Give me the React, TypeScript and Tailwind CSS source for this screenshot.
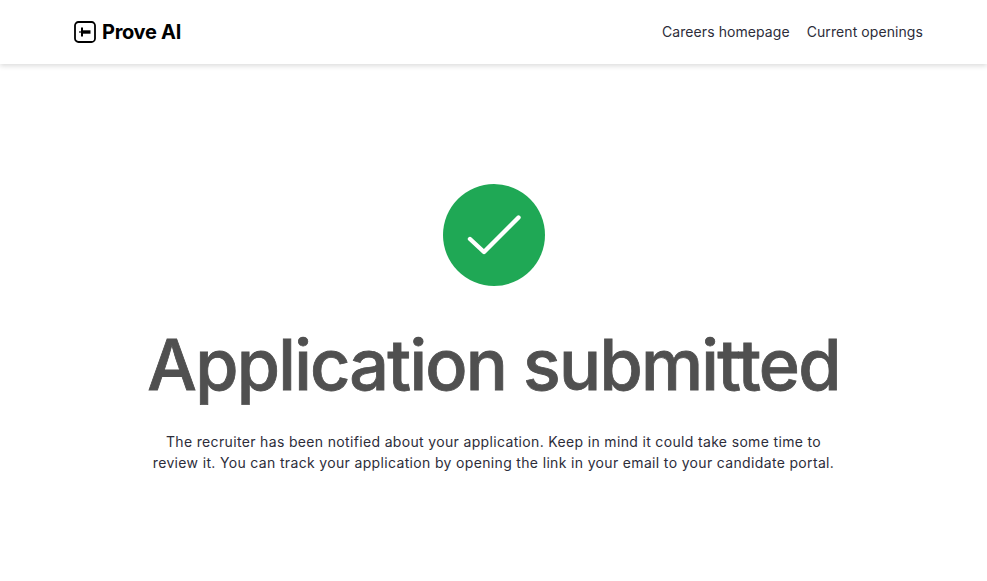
import React from 'react';

const ProveLogo = () => (
  <svg width="22" height="22" viewBox="0 0 22 22" fill="none" stroke="#000">
    <rect x="1" y="1" width="20" height="20" rx="3.5" strokeWidth="1.8" />
    <path d="M5 11h3" strokeWidth="1.2" />
    <path d="M8 6.5v9" strokeWidth="2" />
    <path d="M8 11h8.5" strokeWidth="3.4" />
  </svg>
);

const App: React.FC = () => {
  return (
    <div className="min-h-[581px] bg-white font-['Inter',sans-serif]">
      {/* Header */}
      <header className="flex h-[64px] items-center justify-between pl-[74px] pr-[64px] shadow-[0_2px_5px_rgba(0,0,0,0.14)]">
        <div className="flex items-center gap-[6px]">
          <ProveLogo />
          <span className="text-[20px] font-bold tracking-[-0.3px] text-black">Prove AI</span>
        </div>
        <nav className="flex items-center gap-[17px] pb-[2px] text-[14px] tracking-[0.08px] text-[#2d2d3a]">
          <a href="#">Careers homepage</a>
          <a href="#">Current openings</a>
        </nav>
      </header>

      {/* Confirmation */}
      <main className="flex flex-col items-center pt-[120px]">
        <div className="flex h-[102px] w-[102px] items-center justify-center rounded-full bg-[#1fa855]">
          <svg width="102" height="102" viewBox="0 0 102 102" fill="none">
            <path d="M27 55L41 68L75.5 33.5" stroke="#fff" strokeWidth="4.4" strokeLinecap="round" strokeLinejoin="round" />
          </svg>
        </div>
        <h1 className="mt-[31px] text-[70px] leading-[96px] font-medium tracking-[-1.75px] text-[#505050] [-webkit-text-stroke:0.8px_#505050]">
          Application submitted
        </h1>
        <p className="mt-[18px] w-[700px] text-center text-[14px] leading-[21px] tracking-[0.34px] text-[#2d2d3a]">
          The recruiter has been notified about your application. Keep in mind it could take some time to review it. You can track your application by opening the link in your email to your candidate portal.
        </p>
      </main>
    </div>
  );
};

export default App;
